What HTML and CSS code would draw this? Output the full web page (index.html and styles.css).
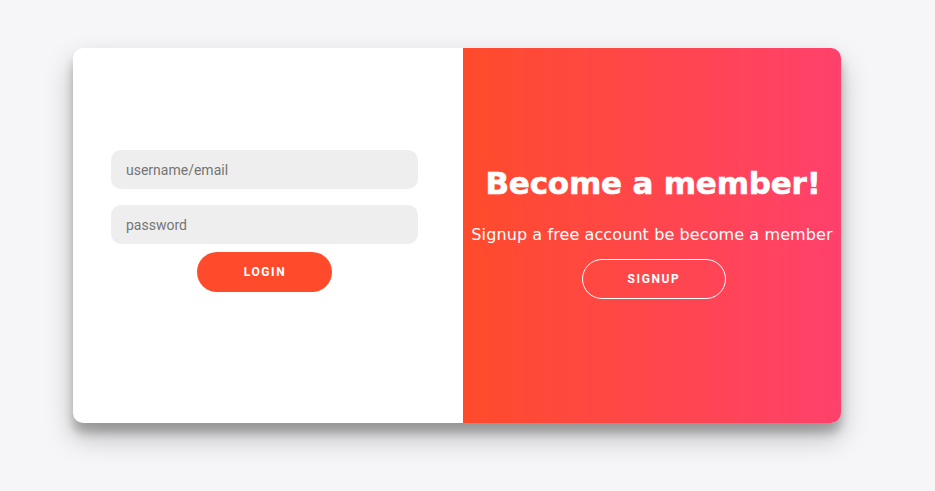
FILE: index.html
```html
<!DOCTYPE html>
<html>
<head>
<meta charset="utf-8">
<link rel="stylesheet" href="styles.css">
</head>
<body>
<div class="card">
  <div class="left">
    <form class="form">
      <input class="field" type="text" placeholder="username/email">
      <input class="field" type="password" placeholder="password">
      <button type="button" class="btn-login">LOGIN</button>
    </form>
  </div>
  <div class="right">
    <h1 class="title">Become a member!</h1>
    <p class="sub">Signup a free account be become a member</p>
    <button type="button" class="btn-ghost">SIGNUP</button>
  </div>
</div>
</body>
</html>
```
FILE: styles.css
```css
html, body {
  margin: 0;
  padding: 0;
}
body {
  background: #f6f5f7;
  width: 935px;
  height: 491px;
  overflow: hidden;
  padding-top: 48px;
  box-sizing: border-box;
}
.card {
  margin-left: 73px;
  width: 768px;
  height: 375px;
  display: flex;
  border-radius: 10px;
  overflow: hidden;
  background: #fff;
  box-shadow: 0 14px 28px rgba(0,0,0,0.25), 0 10px 10px rgba(0,0,0,0.22);
}
.left {
  width: 390px;
  flex: none;
  padding: 102px 0 0 38px;
  box-sizing: border-box;
}
.form {
  width: 307px;
  display: flex;
  flex-direction: column;
  align-items: center;
  margin: 0;
}
.field {
  width: 100%;
  height: 39px;
  box-sizing: border-box;
  border: none;
  outline: none;
  background: #eee;
  border-radius: 10px;
  padding: 0 15px;
  margin: 0 0 16px 0;
  font-family: Roboto, "Liberation Sans", sans-serif;
  font-size: 14px;
  color: #333;
}
.field::placeholder {
  color: #757575;
}
.field + .field {
  margin-bottom: 8px;
}
.btn-login {
  width: 135px;
  height: 40px;
  border: none;
  border-radius: 20px;
  background: #ff4b2b;
  color: #fff;
  font-family: Roboto, "Liberation Sans", sans-serif;
  font-weight: 700;
  font-size: 12px;
  letter-spacing: 1.6px;
  padding: 0 0 0 1px;
}
.right {
  flex: 1;
  background: linear-gradient(to right, #ff4b2b, #ff416c);
  color: #fff;
  display: flex;
  flex-direction: column;
  align-items: center;
  padding-top: 115px;
  box-sizing: border-box;
}
.title {
  margin: 0 0 0 2px;
  font-family: "DejaVu Sans", sans-serif;
  font-weight: 700;
  font-size: 31px;
  line-height: 40px;
  letter-spacing: -0.2px;
  -webkit-text-stroke: 0.6px #fff;
  white-space: nowrap;
}
.sub {
  margin: 21px 0 0 0;
  font-family: "DejaVu Sans", sans-serif;
  font-size: 16px;
  line-height: 22px;
  letter-spacing: 0.1px;
  white-space: nowrap;
}
.btn-ghost {
  margin: 13px 0 0 3px;
  width: 144px;
  height: 40px;
  border: 1px solid #fff;
  border-radius: 20px;
  background: transparent;
  color: #fff;
  font-family: Roboto, "Liberation Sans", sans-serif;
  font-weight: 700;
  font-size: 12px;
  letter-spacing: 1.6px;
  padding: 0 0 0 1px;
}
```
